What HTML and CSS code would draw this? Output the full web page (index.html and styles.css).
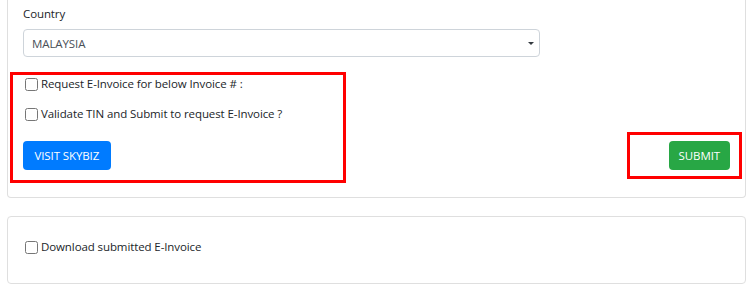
FILE: index.html
```html
<!DOCTYPE html>
<html lang="en">
<head>
<meta charset="utf-8">
<title>E-Invoice</title>
<link rel="stylesheet" href="styles.css">
</head>
<body>
<div class="page">
  <div class="card card-top">
    <div class="card-body">
      <label class="field-label" for="country">Country</label>
      <div class="select-wrap">
        <select id="country" class="select">
          <option>MALAYSIA</option>
        </select>
      </div>
      <label class="check-row first"><input type="checkbox"><span>Request E-Invoice for below Invoice # :</span></label>
      <label class="check-row"><input type="checkbox"><span>Validate TIN and Submit to request E-Invoice ?</span></label>
      <div class="button-row">
        <button class="btn btn-blue" type="button">VISIT SKYBIZ</button>
        <button class="btn btn-green" type="button">SUBMIT</button>
      </div>
    </div>
    <div class="mark mark-left"></div>
    <div class="mark mark-right"></div>
  </div>
  <div class="card card-bottom">
    <div class="card-body body-small">
      <label class="check-row solo"><input type="checkbox"><span>Download submitted E-Invoice</span></label>
    </div>
  </div>
</div>
</body>
</html>
```

FILE: styles.css
```css
html, body {
  margin: 0;
  padding: 0;
  background: #ffffff;
}
body {
  font-family: "Open Sans", "Noto Sans", sans-serif;
  font-size: 11.5px;
  letter-spacing: -0.1px;
  color: #212529;
}
.page {
  padding: 0 6px 0 7px;
}
.card {
  position: relative;
  border: 1px solid #dfdfdf;
  border-radius: 4px;
  background: #fff;
}
.card-top {
  border-top: none;
  border-top-left-radius: 0;
  border-top-right-radius: 0;
}
.card-bottom {
  margin-top: 18px;
}
.card-body {
  padding: 5px 15px 27px 15px;
  display: flex;
  flex-direction: column;
}
.body-small {
  padding: 21px 15px 27px 15px;
}
.field-label {
  display: block;
  line-height: 18px;
  margin-bottom: 6px;
}
.select-wrap {
  position: relative;
  width: 517px;
}
.select-wrap::after {
  content: "";
  position: absolute;
  right: 6px;
  top: 13px;
  border-left: 3px solid transparent;
  border-right: 3px solid transparent;
  border-top: 3px solid #343a40;
}
.select {
  appearance: none;
  -webkit-appearance: none;
  display: block;
  width: 100%;
  height: 28px;
  box-sizing: border-box;
  border: 1px solid #ced4da;
  border-radius: 4px;
  background: #fff;
  color: #495057;
  font-family: inherit;
  font-size: 11.5px;
  letter-spacing: -0.1px;
  padding: 0 8px;
  outline: none;
}
.check-row {
  display: flex;
  align-items: center;
  line-height: 18px;
  margin-top: 12px;
}
.check-row.first {
  margin-top: 18px;
}
.check-row.solo {
  margin-top: 0;
}
.check-row input {
  margin: 0 3px 0 2px;
  width: 13px;
  height: 13px;
}
.button-row {
  display: flex;
  justify-content: space-between;
  margin-top: 18px;
}
.btn {
  height: 29px;
  border: none;
  border-radius: 4px;
  color: #fff;
  font-family: inherit;
  font-size: 11.5px;
  letter-spacing: -0.1px;
  padding: 0 10px;
  cursor: pointer;
}
.btn-blue {
  background: #007bff;
  padding: 0 11.5px;
}
.btn-green {
  background: #28a745;
}
.mark {
  position: absolute;
  border: 3px solid #ff0000;
  box-sizing: border-box;
  pointer-events: none;
}
.mark-left {
  left: 2px;
  top: 72px;
  width: 336px;
  height: 111px;
}
.mark-right {
  left: 619px;
  top: 132px;
  width: 115px;
  height: 47px;
}
```
